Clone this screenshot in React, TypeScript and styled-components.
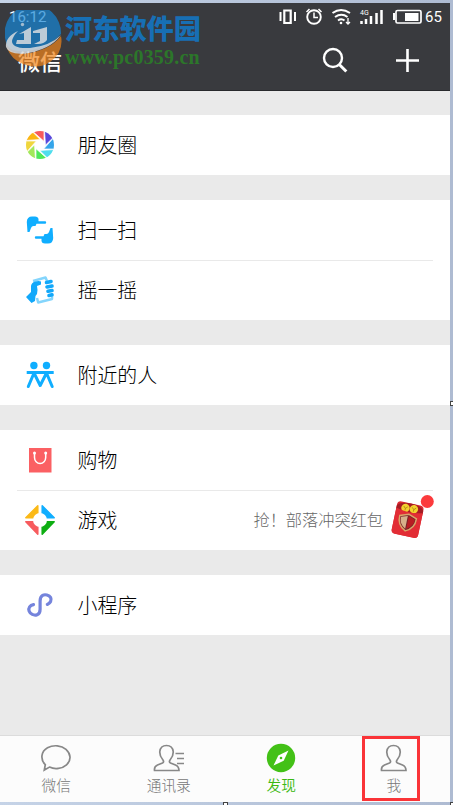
import React from 'react';
import styled, { createGlobalStyle } from 'styled-components';

const Global = createGlobalStyle`
  * { box-sizing: border-box; }
  body { margin: 0; background: #b9c6da; font-family: "Noto Sans CJK SC", sans-serif; }
`;

const Desktop = styled.div`
  position: relative;
  width: 453px;
  height: 805px;
  padding: 3px 3px 3px 0;
  overflow: hidden;
  background: linear-gradient(90deg, #c5d3e7, #aebbd2);
`;
const Phone = styled.main`
  width: 450px;
  height: 799px;
  display: flex;
  flex-direction: column;
  background: #eaeaea;
`;
const Header = styled.header`
  height: 88px;
  flex: none;
  background: #393a3e;
  border-bottom: 1px solid #28292c;
  color: #fff;
`;
const StatusBar = styled.div`
  height: 28px;
  display: flex;
  align-items: center;
  padding: 0 8px 0 9px;
  font: 400 16px/28px Roboto, sans-serif;
`;
const Clock = styled.span`
  flex: 1;
  font-size: 15px;
  color: #fff;
`;
const StatusIcons = styled.svg`
  width: 146px;
  height: 28px;
`;
const Percent = styled.span`
  width: 17px;
  font-size: 15px;
`;
const TitleBar = styled.div`
  height: 58px;
  display: flex;
  align-items: center;
  padding: 0 28px 0 18px;
`;
const Title = styled.h1`
  flex: 1;
  margin: -1px 0 0;
  font-size: 22px;
  font-weight: 500;
  line-height: 58px;
`;
const Actions = styled.div`
  display: flex;
  gap: 45px;
`;
const ActionIcon = styled.svg`
  width: 28px;
  height: 28px;
  fill: none;
  stroke: #fff;
  stroke-width: 2.4;
`;
const Content = styled.div`
  flex: 1;
  display: flex;
  flex-direction: column;
  gap: 25px;
  padding-top: 24px;
`;
const Group = styled.section`
  background: #fff;
`;
const Row = styled.div`
  height: 60px;
  display: flex;
  align-items: center;
  padding: 0 16px 0 24px;
`;
const Divider = styled.div`
  height: 1px;
  margin: 0 17px -1px 17px;
  background: #e9e9e9;
`;
const RowIcon = styled.svg`
  width: 32px;
  height: 32px;
  margin-right: 21.5px;
  flex: none;
`;
const Label = styled.span`
  flex: 1;
  margin-top: -1px;
  font-size: 19.9px;
  font-weight: 300;
  line-height: 60px;
  color: #000;
`;
const Hint = styled.span`
  font-size: 16.2px;
  font-weight: 300;
  color: #666;
  margin: -2px 7px 0 0;
`;
const Packet = styled.svg`
  width: 44px;
  height: 48px;
  margin-top: -8px;
`;
const TabBar = styled.nav`
  height: 67px;
  flex: none;
  display: grid;
  grid-template-columns: repeat(4, 112.5px);
  background: #fcfcfc;
  border-top: 1px solid #dcdcdc;
`;
const Tab = styled.div<{ $active?: boolean }>`
  display: flex;
  flex-direction: column;
  align-items: center;
  padding-top: 6px;
  color: ${p => (p.$active ? '#3cb913' : '#777')};
  font-size: 14.7px;
  font-weight: ${p => (p.$active ? 350 : 300)};
  line-height: 22px;
`;
const TabIcon = styled.svg`
  width: 34px;
  height: 32px;
  fill: none;
  stroke: #888;
  stroke-width: 1.7;
`;
const Highlight = styled.div`
  position: absolute;
  left: 362px;
  top: 736px;
  width: 58px;
  height: 65px;
  border: 3px solid #fa3438;
`;
const Watermark = styled.div`
  position: absolute;
  left: 5px;
  top: 10px;
  display: flex;
  gap: 3px;
`;
const WatermarkLogo = styled.svg`
  width: 57px;
  height: 58px;
`;
const WatermarkName = styled.div`
  height: 36px;
  margin-top: -1px;
  font-size: 27.2px;
  font-weight: 900;
  line-height: 37px;
  color: #176fb4;
  white-space: nowrap;
`;
const WatermarkUrl = styled.div`
  font: bold 20px/24px "Liberation Serif", serif;
  letter-spacing: 0.2px;
  color: #2c762a;
`;
const Handle = styled.i<{ $x: number; $y: number }>`
  position: absolute;
  left: ${p => p.$x}px;
  top: ${p => p.$y}px;
  width: 5px;
  height: 5px;
  border: 1px solid #444;
  background: #fff;
`;

const blades = ['#f75b5c', '#5948dc', '#35a5ea', '#4fdded', '#4ee85a', '#a2e85a', '#f0d63c', '#fbb512'];

const Moments = () => (
  <RowIcon viewBox="0 0 32 32">
    <defs><clipPath id="disc"><circle cx="16" cy="16" r="14" /></clipPath></defs>
    <g clipPath="url(#disc)">
      {blades.map((c, i) => (
        <path key={c} d="M9.800 3.300L20 12.300V0H9.500z" fill={c} stroke="#fff" strokeWidth=".7" transform={`rotate(${i * 45} 16 16)`} />
      ))}
    </g>
  </RowIcon>
);
const Scan = () => (
  <RowIcon viewBox="0 0 32 32" fill="#10aeff">
    <path d="M3.500 18L2.800 8Q3 2.500 8 2.500h3q3 0 3.500 2.500v2.300H21q1.200 0 1.200 1.200T21 9.800h-8.500L11.500 12H9.500q-1.800 0-2.500 2L5.500 18z" />
    <path d="M28.500 14l.7 10q-.2 5.500-5.200 5.500h-3q-3 0-3.500-2.500v-2.300H12q-1.200 0-1.200-1.200T12 22.200h7.500l1-2.200h2q1.800 0 2.500-2l1.500-4z" />
  </RowIcon>
);
const Shake = () => (
  <RowIcon viewBox="0 0 32 32">
    <path d="M8.500 7L21.500 3.500 28 25.500 14 29z" fill="#fff" />
    <path d="M9 7l12.500-3.500L23 7M13 24l1.200 4.500L28 25v-3" fill="none" stroke="#84d5fc" strokeWidth="2.500" strokeLinejoin="round" />
    <path d="M2 23l5-5V12q.5-3.500 4-4.500 4-1 6 0v3l-4 1.500q1 4 0 8l-1.500 2-.5 5-3.500 2z" fill="#12a8fa" />
    <path d="M22.500 8.500L27 7.500M23 13l5-1M24 17.300l4-.8M25 21.500l3-.7" stroke="#12a8fa" strokeWidth="3.600" strokeLinecap="round" />
  </RowIcon>
);
const Nearby = () => (
  <RowIcon viewBox="0 0 32 32" fill="#10aeff">
    <circle cx="9.900" cy="6.500" r="3.700" /><circle cx="22.500" cy="6.500" r="3.700" />
    <path d="M2.700 12h27v3h-27z" />
    <path d="M10 14L4.300 27.500M10 14l6.200 12.500L22.500 14l5.700 13.500" fill="none" stroke="#10aeff" strokeWidth="3" strokeLinecap="round" strokeLinejoin="round" />
  </RowIcon>
);
const Shop = () => (
  <RowIcon viewBox="0 0 32 32">
    <path d="M5 4h22.500v24.500H5z" fill="#fb6063" />
    <path d="M10.500 9v4.500a5.600 6 0 0 0 11.200 0V9" fill="none" stroke="#fff" strokeWidth="1.500" />
    <circle cx="10.500" cy="9" r="1.500" fill="#fff" /><circle cx="21.700" cy="9" r="1.500" fill="#fff" />
  </RowIcon>
);
const Games = () => (
  <RowIcon viewBox="0 0 32 32" strokeWidth="1.500" strokeLinejoin="round">
    <path d="M1.800 13.800L13.800 1.800V9.500L9.500 13.800z" fill="#fbb916" stroke="#fbb916" />
    <path d="M18.200 1.800L30.200 13.800H22.500L18.200 9.500z" fill="#10aeff" stroke="#10aeff" />
    <path d="M1.800 17.700H9.500L13.800 22v8.200z" fill="#f75b5e" stroke="#f75b5e" />
    <path d="M22.500 17.700h7.700L18.200 30.200V22z" fill="#0eae12" stroke="#0eae12" />
    <circle cx="16" cy="16" r="7" fill="#fff" />
  </RowIcon>
);
const Mini = () => (
  <RowIcon viewBox="0 0 32 32" fill="none" stroke="#7584dc" strokeWidth="3.200" strokeLinecap="round">
    <path d="M9.500 15.600C6 16.300 4.100 19 5.100 22s4.900 4.900 8 3.700 3-3.900 3-5.700v-8c0-2 .3-4.500 2.500-5.700s6.700-.4 8 2.200-.2 5.600-3.300 6.900" />
  </RowIcon>
);

const RedPacket = () => (
  <Packet viewBox="0 0 44 48">
    <g transform="rotate(12 17 28)">
      <rect x="4" y="11" width="27" height="33" rx="4" fill="#df2932" />
      <path d="M4 19v-3q2-5 13.500-5T31 16v3q-13.500 4-27 0z" fill="#a51c24" />
      <circle cx="13" cy="16.500" r="4.200" fill="#f3d12e" /><circle cx="21.500" cy="16" r="4.200" fill="#f3d12e" />
      <path d="M11 15l2 2 2-2M13 17v2M19.500 14.500l2 2 2-2M21.500 16.500v2" stroke="#a87910" strokeWidth=".7" fill="none" />
      <path d="M4 18q13.500 4 27 0v22q0 4-4 4H8q-4 0-4-4z" fill="#e22d35" />
      <path d="M17.500 22l8.500 3q.5 10-8.500 14Q8.500 35 9 25z" fill="#76252a" stroke="#d9a66a" strokeWidth="1.500" />
      <path d="M17 24v13q-7-4-6.500-11z" fill="#d6b08a" /><path d="M18 24v13q7-4 6.500-11z" fill="#b91c22" />
    </g>
    <circle cx="37.300" cy="9.500" r="6.500" fill="#fc3a3c" />
  </Packet>
);

const person = 'M4 28.500Q3.500 24.500 7 23l5-2q2-1 .3-3.300Q9 14 9.300 9.500 10 3.500 16 3.500t6.700 6q.3 4.500-3 8.200Q18 20 20 21l5 2q3.500 1.500 3.500 5.500z';

export default function App() {
  return (
    <>
      <Global />
      <Desktop>
        <Phone>
          <Header>
            <StatusBar>
              <Clock>16:12</Clock>
              <StatusIcons viewBox="280 3 146 28" fill="none" stroke="#fff">
                <path d="M285.300 10.500h6.400v12.500h-6.400z" strokeWidth="2.200" />
                <path d="M281.500 12v9M296 12v9" strokeWidth="2" />
                <circle cx="315" cy="17" r="6.800" strokeWidth="1.900" />
                <path d="M315 12.500v5h4M307.500 12l3-3M319.500 9l3 3" strokeWidth="1.500" />
                <path d="M333.500 13q8.500-6 17.500 0M336 17q6.500-4.500 12.500 0M339 20.500q3.500-2.500 6.500 0" strokeWidth="2" />
                <circle cx="342" cy="23" r="1.300" fill="#fff" stroke="none" />
                <path d="M349 18v6M347 22l2 2 2-2" strokeWidth="1.300" />
                <path d="M362.500 21v3M367 19v5M372 16v8M377.500 13v11M382.500 10v14" strokeWidth="2.500" />
                <text x="361" y="15" fontFamily="Roboto, sans-serif" fontSize="7" fill="#fff" stroke="none">4G</text>
                <rect x="397" y="10.500" width="25" height="12.500" rx="1.500" strokeWidth="1.700" />
                <path d="M395 13v7" strokeWidth="2" /><path d="M406 13h13.500v8H406z" fill="#fff" stroke="none" />
              </StatusIcons>
              <Percent>65</Percent>
            </StatusBar>
            <TitleBar>
              <Title>微信</Title>
              <Actions>
                <ActionIcon viewBox="0 0 28 28"><circle cx="12" cy="12" r="9" /><path d="M18.300 18.500l7 7" strokeWidth="3" /></ActionIcon>
                <ActionIcon viewBox="0 0 28 28"><path d="M13.500 3v23M2 14.500h23" strokeWidth="2.600" /></ActionIcon>
              </Actions>
            </TitleBar>
          </Header>
          <Content>
            <Group><Row><Moments /><Label>朋友圈</Label></Row></Group>
            <Group>
              <Row><Scan /><Label>扫一扫</Label></Row>
              <Divider />
              <Row><Shake /><Label>摇一摇</Label></Row>
            </Group>
            <Group><Row><Nearby /><Label>附近的人</Label></Row></Group>
            <Group>
              <Row><Shop /><Label>购物</Label></Row>
              <Divider />
              <Row><Games /><Label>游戏</Label><Hint>抢！部落冲突红包</Hint><RedPacket /></Row>
            </Group>
            <Group><Row><Mini /><Label>小程序</Label></Row></Group>
          </Content>
          <TabBar>
            <Tab>
              <TabIcon viewBox="0 0 34 32"><path d="M4.800 28l1-5.300C.5 17.500 1.500 9.500 8 5.800c6-3.300 14-2.500 18.500 1.500 5 4.500 5.500 11 .5 15.500-4.500 4-11.500 5-17 2.300z" transform="translate(.5 0)" /></TabIcon>
              微信
            </Tab>
            <Tab>
              <TabIcon viewBox="0 0 34 32"><path d={person} transform="translate(-1.500 0)" /><path d="M23.500 11.500H32M25 16.500h7M25 21.500h7" /></TabIcon>
              通讯录
            </Tab>
            <Tab $active>
              <TabIcon viewBox="0 0 34 32">
                <circle cx="17" cy="16" r="14.200" fill="#43c117" stroke="none" />
                <path d="M24.500 8.500l-4.800 10.300-10.200 4.700 4.800-10z" fill="#fff" stroke="none" /><circle cx="17" cy="16" r="1.300" fill="#43c117" stroke="none" />
              </TabIcon>
              发现
            </Tab>
            <Tab><TabIcon viewBox="0 0 34 32"><path d={person} transform="translate(.5 0)" /></TabIcon>我</Tab>
          </TabBar>
        </Phone>
        <Watermark>
          <WatermarkLogo viewBox="0 0 57 58">
            <path d="M.5 30A28.200 28.200 0 1 1 56 24Q44 38 22 41Q2 43 .5 30z" fill="#1586d6" opacity=".7" />
            <path d="M2 38Q8 44 20 43.500Q44 41 56 26Q59 42 45 52Q33 60 18 54Q6 49 2 38z" fill="#f18519" opacity=".7" />
            <path d="M13 21Q0 27 1 37Q4 45 20 43.500Q45 40 56 25Q45 36 25 38Q7 39 7 31Q8 26 13 21z" fill="#d8dcdf" opacity=".85" />
            <path d="M14 24L26 17V34H11L12 30H19V23zM28 21L42 17V30Q39 34 33 34H29L35 31V23H28z" fill="#d8dcdf" opacity=".85" />
            <circle cx="17.500" cy="14.500" r="1.700" fill="#d8dcdf" opacity=".7" />
          </WatermarkLogo>
          <div><WatermarkName>河东软件园</WatermarkName><WatermarkUrl>www.pc0359.cn</WatermarkUrl></div>
        </Watermark>
        <Highlight />
        <Handle $x={450} $y={401} /><Handle $x={223} $y={802} /><Handle $x={450} $y={802} />
      </Desktop>
    </>
  );
}
